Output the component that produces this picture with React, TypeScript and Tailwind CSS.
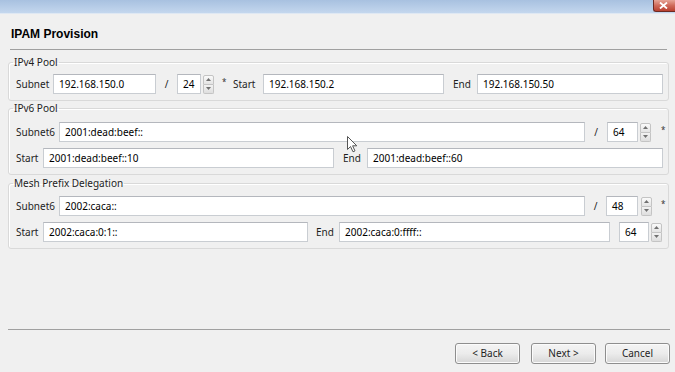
import React from "react";

function Field({ className, value }: { className: string; value: string }) {
  return (
    <div
      className={`h-[20px] shrink-0 bg-white border border-[#c9cdd2] border-t-[#b4b7bd] flex items-center pl-[5px] text-[10px] text-black whitespace-nowrap overflow-hidden ${className}`}
    >
      {value}
    </div>
  );
}

function Arrows({ className = "" }: { className?: string }) {
  return (
    <div className={`flex flex-col h-[19px] w-[11px] shrink-0 ${className}`}>
      <div className="flex-1 border border-[#c4c4c4] rounded-t-[2px] bg-linear-to-b from-[#fafafa] to-[#e4e4e4] flex items-center justify-center">
        <svg width="5" height="3" viewBox="0 0 5 3">
          <path d="M0 3 L2.5 0 L5 3 Z" fill="#707070" />
        </svg>
      </div>
      <div className="flex-1 border border-t-0 border-[#c4c4c4] rounded-b-[2px] bg-linear-to-b from-[#f2f2f2] to-[#dedede] flex items-center justify-center">
        <svg width="5" height="3" viewBox="0 0 5 3">
          <path d="M0 0 L2.5 3 L5 0 Z" fill="#707070" />
        </svg>
      </div>
    </div>
  );
}

function Label({ className, text }: { className: string; text: string }) {
  return (
    <div className={`shrink-0 text-[10px] text-[#1e1e1e] whitespace-nowrap ${className}`}>{text}</div>
  );
}

function Star({ className }: { className: string }) {
  return (
    <div className={`shrink-0 self-start pt-[3px] text-[8px] leading-[10px] text-[#333333] ${className}`}>*</div>
  );
}

function Group({
  title,
  className,
  children,
}: {
  title: string;
  className: string;
  children: React.ReactNode;
}) {
  return (
    <fieldset
      className={`ml-[8px] mr-[6px] border border-[#d9d9d9] rounded-[3px] shadow-[inset_1px_1px_0_#ffffff] ${className}`}
    >
      <legend className="ml-[4px] px-[1px] text-[10px] leading-[14px] text-[#1e1e1e]">{title}</legend>
      {children}
    </fieldset>
  );
}

function Button({ text, className }: { text: string; className: string }) {
  return (
    <div
      className={`h-[21px] w-[65px] shrink-0 flex items-center justify-center rounded-[3px] border border-[#8e8e8e] bg-linear-to-b from-[#f4f4f4] via-[#ececec] to-[#d6d6d6] text-[10px] text-[#1e1e1e] shadow-[inset_0_0_0_1px_#fbfbfb] ${className}`}
    >
      {text}
    </div>
  );
}

export default function App() {
  return (
    <div className="relative w-[675px] h-[372px] overflow-hidden bg-[#f0f0f0] flex flex-col font-['Noto_Sans',sans-serif]">
      {/* title bar */}
      <div className="h-[14px] shrink-0 bg-linear-to-b from-[#a8c1e0] to-[#c4d7ee] border-b border-[#dfe8f3] flex justify-end">
        <div className="w-[22px] h-[12px] rounded-bl-[3px] border border-t-0 border-r-0 border-[#6e2a22] bg-linear-to-b from-[#e6a597] via-[#cf6a5a] to-[#b9402f] flex items-center pl-[5px]">
          <svg width="9" height="7" viewBox="0 0 9 7">
            <path d="M1 0.5 L8 6.5 M8 0.5 L1 6.5" stroke="#ffffff" strokeWidth="1.8" />
          </svg>
        </div>
      </div>

      {/* header */}
      <div className="h-[35px] shrink-0 pt-[13px] pl-[11px]">
        <div className="font-['Liberation_Sans',Arial,sans-serif] font-bold text-[12px] leading-[14px] text-black">
          IPAM Provision
        </div>
      </div>
      <div className="h-px shrink-0 ml-[10px] mr-[8px] bg-[#a0a0a0]" />

      {/* IPv4 Pool */}
      <Group title="IPv4 Pool" className="mt-[5px] pt-[5px] pb-[6px]">
        <div className="flex items-center h-[20px]">
          <Label className="w-[44px] pl-[7px]" text="Subnet" />
          <Field className="w-[103px]" value="192.168.150.0" />
          <Label className="w-[21px] text-center" text="/" />
          <Field className="w-[24px]" value="24" />
          <Arrows className="ml-[2px]" />
          <Star className="w-[19px] pl-[8px]" />
          <Label className="w-[30px]" text="Start" />
          <Field className="w-[181px]" value="192.168.150.2" />
          <Label className="w-[33px] pl-[9px]" text="End" />
          <Field className="w-[186px]" value="192.168.150.50" />
        </div>
      </Group>

      {/* IPv6 Pool */}
      <Group title="IPv6 Pool" className="pt-[7px] pb-[6px]">
        <div className="flex items-center h-[20px]">
          <Label className="w-[50px] pl-[7px]" text="Subnet6" />
          <Field className="w-[526px]" value="2001:dead:beef::" />
          <Label className="w-[22px] text-center" text="/" />
          <Field className="w-[31px]" value="64" />
          <Arrows className="ml-[2px]" />
          <Star className="pl-[10px]" />
        </div>
        <div className="flex items-center h-[20px] mt-[6px]">
          <Label className="w-[34px] pl-[7px]" text="Start" />
          <Field className="w-[291px]" value="2001:dead:beef::10" />
          <Label className="w-[33px] pl-[9px]" text="End" />
          <Field className="w-[296px]" value="2001:dead:beef::60" />
        </div>
      </Group>

      {/* Mesh Prefix Delegation */}
      <Group title="Mesh Prefix Delegation" className="mt-[1px] pt-[6px] pb-[6px]">
        <div className="flex items-center h-[20px]">
          <Label className="w-[50px] pl-[7px]" text="Subnet6" />
          <Field className="w-[526px]" value="2002:caca::" />
          <Label className="w-[21px] text-center" text="/" />
          <Field className="w-[32px]" value="48" />
          <Arrows className="ml-[3px]" />
          <Star className="pl-[9px]" />
        </div>
        <div className="flex items-center h-[20px] mt-[6px]">
          <Label className="w-[34px] pl-[7px]" text="Start" />
          <Field className="w-[265px]" value="2002:caca:0:1::" />
          <Label className="w-[31px] pl-[8px]" text="End" />
          <Field className="w-[271px]" value="2002:caca:0:ffff::" />
          <Field className="w-[30px] ml-[9px]" value="64" />
          <Arrows className="ml-[2px]" />
        </div>
      </Group>

      <div className="flex-1" />

      {/* footer */}
      <div className="h-px shrink-0 ml-[8px] mr-[5px] bg-[#a0a0a0]" />
      <div className="flex shrink-0 mt-[13px] mb-[8px] pl-[455px]">
        <Button text="< Back" className="" />
        <Button text="Next >" className="ml-[11px]" />
        <Button text="Cancel" className="ml-[9px]" />
      </div>

      {/* mouse cursor */}
      <svg
        className="absolute left-[347px] top-[136px]"
        width="11"
        height="17"
        viewBox="0 0 11 17"
      >
        <path
          d="M0.5 0.5 L0.5 13.5 L3.5 10.5 L6 15.8 L8 14.9 L5.6 9.8 L9.8 9.8 Z"
          fill="#ffffff"
          stroke="#555555"
          strokeWidth="1"
          strokeLinejoin="round"
        />
      </svg>
    </div>
  );
}
